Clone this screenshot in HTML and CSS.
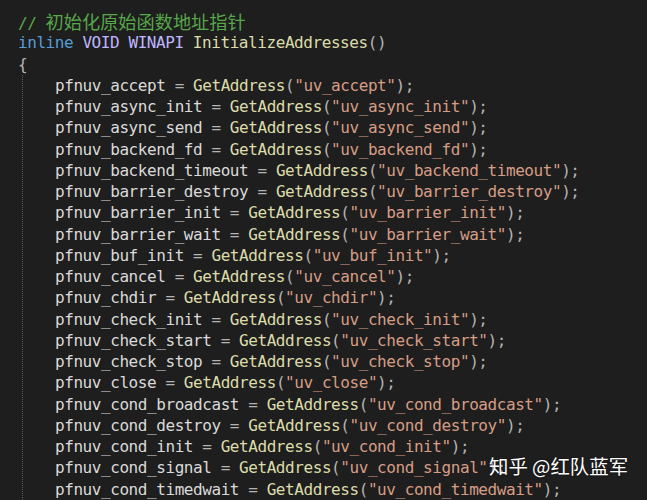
FILE: index.html
```html
<!DOCTYPE html>
<html>
<head>
<meta charset="utf-8">
<link rel="stylesheet" href="styles.css">
</head>
<body>
<div class="editor">
  <div class="line"><span class="cm">// <span class="cjk">初始化原始函数地址指针</span></span></div>
  <div class="line"><span class="kw">inline</span> <span class="mac">VOID</span> <span class="mac">WINAPI</span> <span class="fn">InitializeAddresses</span><span class="p">()</span></div>
  <div class="line"><span class="p">{</span></div>
  <div class="block">
    <div class="line"><span class="id">pfnuv_accept</span> <span class="p">=</span> <span class="fn">GetAddress</span><span class="p">(</span><span class="str">"uv_accept"</span><span class="p">);</span></div>
    <div class="line"><span class="id">pfnuv_async_init</span> <span class="p">=</span> <span class="fn">GetAddress</span><span class="p">(</span><span class="str">"uv_async_init"</span><span class="p">);</span></div>
    <div class="line"><span class="id">pfnuv_async_send</span> <span class="p">=</span> <span class="fn">GetAddress</span><span class="p">(</span><span class="str">"uv_async_send"</span><span class="p">);</span></div>
    <div class="line"><span class="id">pfnuv_backend_fd</span> <span class="p">=</span> <span class="fn">GetAddress</span><span class="p">(</span><span class="str">"uv_backend_fd"</span><span class="p">);</span></div>
    <div class="line"><span class="id">pfnuv_backend_timeout</span> <span class="p">=</span> <span class="fn">GetAddress</span><span class="p">(</span><span class="str">"uv_backend_timeout"</span><span class="p">);</span></div>
    <div class="line"><span class="id">pfnuv_barrier_destroy</span> <span class="p">=</span> <span class="fn">GetAddress</span><span class="p">(</span><span class="str">"uv_barrier_destroy"</span><span class="p">);</span></div>
    <div class="line"><span class="id">pfnuv_barrier_init</span> <span class="p">=</span> <span class="fn">GetAddress</span><span class="p">(</span><span class="str">"uv_barrier_init"</span><span class="p">);</span></div>
    <div class="line"><span class="id">pfnuv_barrier_wait</span> <span class="p">=</span> <span class="fn">GetAddress</span><span class="p">(</span><span class="str">"uv_barrier_wait"</span><span class="p">);</span></div>
    <div class="line"><span class="id">pfnuv_buf_init</span> <span class="p">=</span> <span class="fn">GetAddress</span><span class="p">(</span><span class="str">"uv_buf_init"</span><span class="p">);</span></div>
    <div class="line"><span class="id">pfnuv_cancel</span> <span class="p">=</span> <span class="fn">GetAddress</span><span class="p">(</span><span class="str">"uv_cancel"</span><span class="p">);</span></div>
    <div class="line"><span class="id">pfnuv_chdir</span> <span class="p">=</span> <span class="fn">GetAddress</span><span class="p">(</span><span class="str">"uv_chdir"</span><span class="p">);</span></div>
    <div class="line"><span class="id">pfnuv_check_init</span> <span class="p">=</span> <span class="fn">GetAddress</span><span class="p">(</span><span class="str">"uv_check_init"</span><span class="p">);</span></div>
    <div class="line"><span class="id">pfnuv_check_start</span> <span class="p">=</span> <span class="fn">GetAddress</span><span class="p">(</span><span class="str">"uv_check_start"</span><span class="p">);</span></div>
    <div class="line"><span class="id">pfnuv_check_stop</span> <span class="p">=</span> <span class="fn">GetAddress</span><span class="p">(</span><span class="str">"uv_check_stop"</span><span class="p">);</span></div>
    <div class="line"><span class="id">pfnuv_close</span> <span class="p">=</span> <span class="fn">GetAddress</span><span class="p">(</span><span class="str">"uv_close"</span><span class="p">);</span></div>
    <div class="line"><span class="id">pfnuv_cond_broadcast</span> <span class="p">=</span> <span class="fn">GetAddress</span><span class="p">(</span><span class="str">"uv_cond_broadcast"</span><span class="p">);</span></div>
    <div class="line"><span class="id">pfnuv_cond_destroy</span> <span class="p">=</span> <span class="fn">GetAddress</span><span class="p">(</span><span class="str">"uv_cond_destroy"</span><span class="p">);</span></div>
    <div class="line"><span class="id">pfnuv_cond_init</span> <span class="p">=</span> <span class="fn">GetAddress</span><span class="p">(</span><span class="str">"uv_cond_init"</span><span class="p">);</span></div>
    <div class="line"><span class="id">pfnuv_cond_signal</span> <span class="p">=</span> <span class="fn">GetAddress</span><span class="p">(</span><span class="str">"uv_cond_signal"</span><span class="p">);</span></div>
    <div class="line"><span class="id">pfnuv_cond_timedwait</span> <span class="p">=</span> <span class="fn">GetAddress</span><span class="p">(</span><span class="str">"uv_cond_timedwait"</span><span class="p">);</span></div>
  </div>
</div>
<div class="watermark">知乎 @红队蓝军</div>
</body>
</html>
```
FILE: styles.css
```css
html, body {
  margin: 0;
  padding: 0;
  background: #1e1e1e;
  width: 647px;
  height: 500px;
  overflow: hidden;
}
body {
  position: relative;
}
.editor {
  padding: 11px 0 0 18px;
  font-family: "DejaVu Sans Mono", "Liberation Mono", monospace;
  font-size: 16px;
  letter-spacing: -0.43px;
  color: #dadada;
}
.line {
  height: 21.26px;
  line-height: 21.26px;
  white-space: pre;
}
.block {
  margin-left: 4px;
  border-left: 1px dotted #5c5c5c;
  padding-left: 32px;
  padding-bottom: 20px;
}
.cm { color: #57a64a; }
.cjk {
  font-family: "Noto Sans CJK SC", sans-serif;
  font-size: 18.2px;
  letter-spacing: 0;
}
.kw { color: #569cd6; }
.mac { color: #beb7ff; }
.fn { color: #dcdcaa; }
.id { color: #dadada; }
.p { color: #b4b4b4; }
.str { color: #d69d85; }
.watermark {
  position: absolute;
  left: 489px;
  top: 451px;
  font-family: "Noto Sans CJK SC", sans-serif;
  font-size: 19.4px;
  line-height: 30px;
  color: #ffffff;
  text-shadow: 0 0 2px rgba(0,0,0,0.6);
  white-space: pre;
}
```
